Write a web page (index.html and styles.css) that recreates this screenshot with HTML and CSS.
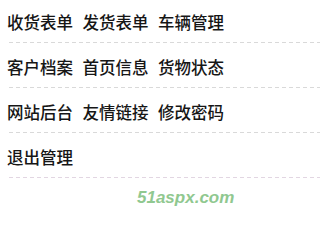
FILE: index.html
```html
<!DOCTYPE html>
<html lang="zh-CN">
<head>
<meta charset="utf-8">
<link rel="stylesheet" href="styles.css">
</head>
<body>
<div class="menu">
  <ul class="row">
    <li><a href="#">收货表单</a></li>
    <li><a href="#">发货表单</a></li>
    <li><a href="#">车辆管理</a></li>
  </ul>
  <ul class="row">
    <li><a href="#">客户档案</a></li>
    <li><a href="#">首页信息</a></li>
    <li><a href="#">货物状态</a></li>
  </ul>
  <ul class="row">
    <li><a href="#">网站后台</a></li>
    <li><a href="#">友情链接</a></li>
    <li><a href="#">修改密码</a></li>
  </ul>
  <ul class="row last">
    <li><a href="#">退出管理</a></li>
  </ul>
  <div class="mark">51aspx.com</div>
</div>
</body>
</html>
```
FILE: styles.css
```css
html, body {
  margin: 0;
  padding: 0;
  background: #fff;
}
.menu {
  padding: 0 0 0 7px;
  font-family: "Noto Sans CJK SC", "Noto Sans", sans-serif;
}
.row {
  list-style: none;
  margin: 0 0 2px 2px;
  padding: 10px 0 0 0;
  display: flex;
  height: 32px;
  align-items: flex-start;
  background-image: linear-gradient(to right, #d9d9d9 0 4px, transparent 4px 7px);
  background-size: 7px 1px;
  background-repeat: repeat-x;
  background-position: 0 100%;
  padding-bottom: 1px;
}
.row.last {
  background-image: linear-gradient(to right, #e2d6e2 0 4px, transparent 4px 7px);
}
.row li {
  width: 75.5px;
  flex: none;
}
.row li:first-child {
  margin-left: -2px;
}
.row a {
  color: #161616;
  text-decoration: none;
  font-size: 16.5px;
  font-weight: 500;
  line-height: 20px;
  white-space: nowrap;
}
.mark {
  font-family: "Liberation Sans", Arial, sans-serif;
  font-weight: bold;
  font-style: italic;
  font-size: 17px;
  color: #90c890;
  padding-left: 130px;
  padding-top: 8px;
}
```
